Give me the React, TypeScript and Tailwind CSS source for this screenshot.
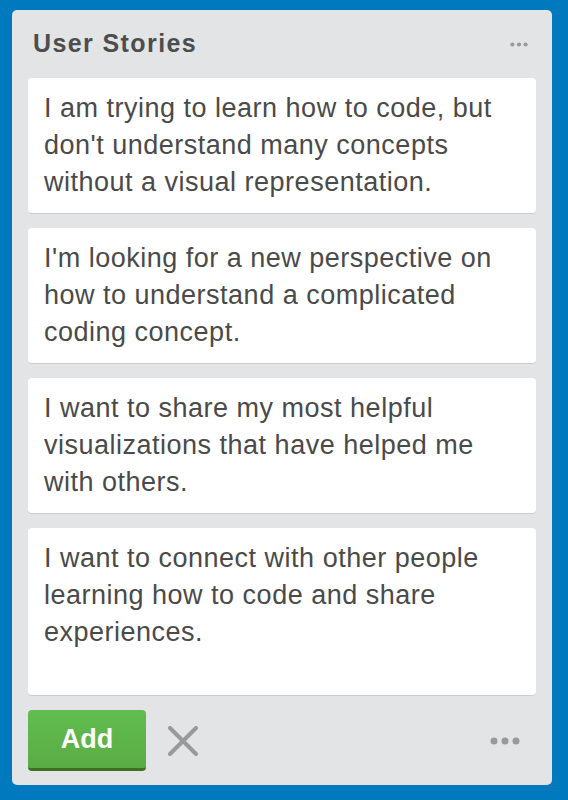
const stories = [
  "I am trying to learn how to code, but don't understand many concepts without a visual representation.",
  "I'm looking for a new perspective on how to understand a complicated coding concept.",
  "I want to share my most helpful visualizations that have helped me with others.",
]

function Dots({ className }: { className?: string }) {
  return (
    <svg className={className} width="30" height="8" viewBox="0 0 30 8" fill="currentColor">
      <circle cx="4" cy="4" r="3.5" />
      <circle cx="15" cy="4" r="3.5" />
      <circle cx="26" cy="4" r="3.5" />
    </svg>
  )
}

export default function App() {
  return (
    <div className="w-[568px] h-[800px] bg-[#0079bf] pt-[10px] px-[12px] font-['Liberation_Sans',Arial,sans-serif]">
      <div className="w-[540px] h-[775px] bg-[#e2e4e6] rounded-[5px] px-[16px] flex flex-col">
        <div className="flex items-center justify-between h-[68px] pl-[5px] pr-[8px]">
          <h2 className="text-[25px] font-bold text-[#4d4d4d] tracking-[1.4px]">User Stories</h2>
          <Dots className="text-[#999] w-[18px] h-[5px]" />
        </div>
        <div className="flex flex-col gap-[14px]">
          {stories.map((s) => (
            <div
              key={s}
              className="bg-white rounded-[4px] border-b border-[#c9ccd0] h-[136px] pt-[12px] pl-[16px] pr-[12px] text-[27px] leading-[37px] tracking-[0.5px] text-[#4a4a4a]"
            >
              {s}
            </div>
          ))}
          <div className="bg-white rounded-[4px] border-b border-[#c9ccd0] h-[168px] pt-[12px] pl-[16px] pr-[12px] text-[27px] leading-[37px] tracking-[0.5px] text-[#4a4a4a]">
            I want to connect with other people learning how to code and share experiences.
          </div>
        </div>
        <div className="flex items-center mt-[14px]">
          <button className="w-[118px] h-[61px] rounded-[4px] bg-gradient-to-b from-[#61bd4f] to-[#5aac44] border-b-[3px] border-[#3f6f21] text-white text-[27px] font-bold">
            Add
          </button>
          <svg className="ml-[22px]" width="30" height="30" viewBox="0 0 30 30" stroke="#999" strokeWidth="4" strokeLinecap="round">
            <path d="M2 2 L28 28 M28 2 L2 28" />
          </svg>
          <Dots className="ml-auto mr-[16px] text-[#999]" />
        </div>
      </div>
    </div>
  )
}
